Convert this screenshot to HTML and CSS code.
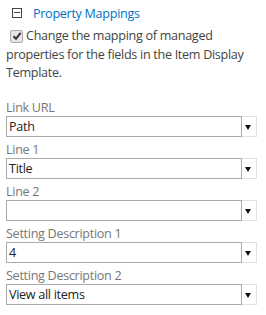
FILE: index.html
```html
<!DOCTYPE html>
<html lang="en">
<head>
    <meta charset="UTF-8">
    <title>Property Mappings</title>
    <link rel="stylesheet" href="styles.css">
</head>
<body>
  <div class="panel">
    <div class="head">
      <span class="toggle"></span>
      <span class="head-title">Property Mappings</span>
    </div>

    <p class="note">
      <span class="check">
        <svg width="10" height="10" viewBox="0 0 10 10"><path d="M1.5 5.2 L4 7.8 L8.6 1.8" fill="none" stroke="#333" stroke-width="2"/></svg>
      </span>Change the mapping of managed properties for the fields in the Item Display Template.
    </p>

    <div class="fields">
      <div class="field">
        <label>Link URL</label>
        <div class="select"><span class="value">Path</span><span class="arrow"></span></div>
      </div>
      <div class="field">
        <label>Line 1</label>
        <div class="select"><span class="value">Title</span><span class="arrow"></span></div>
      </div>
      <div class="field">
        <label>Line 2</label>
        <div class="select"><span class="value"></span><span class="arrow"></span></div>
      </div>
      <div class="field">
        <label>Setting Description 1</label>
        <div class="select"><span class="value">4</span><span class="arrow"></span></div>
      </div>
      <div class="field">
        <label>Setting Description 2</label>
        <div class="select"><span class="value">View all items</span><span class="arrow"></span></div>
      </div>
    </div>
  </div>
</body>
</html>
```

FILE: styles.css
```css
body{
    margin: 0;
    background-color: white;
    font-family: "Open Sans", "Noto Sans", sans-serif;
    font-size: 12.6px;
    letter-spacing: -0.3px;
    color: #444;
}
.panel{
    padding: 3px 8px 0 6px;
}
.head{
    display: flex;
    align-items: center;
    height: 20px;
}
.toggle{
    position: relative;
    width: 8px;
    height: 8px;
    border: 1px solid #444;
    margin-left: 6px;
}
.toggle::after{
    content: "";
    position: absolute;
    left: 1px;
    right: 1px;
    top: 3px;
    height: 1px;
    background: #444;
}
.head-title{
    margin-left: 11px;
    color: #0072c6;
}
.note{
    margin: 4px 0 0 0;
    line-height: 18.5px;
}
.check{
    display: inline-flex;
    align-items: center;
    justify-content: center;
    width: 11px;
    height: 11px;
    margin: 0 3px 0 4px;
    border: 1px solid #aaa;
    border-radius: 2px;
    background: #e4e4e4;
    vertical-align: -1px;
}
.fields{
    margin-top: 16px;
}
.field{
    margin-bottom: 4px;
}
.field label{
    display: block;
    color: #777;
    line-height: 17px;
}
.select{
    display: flex;
    height: 21px;
    margin-right: 1px;
}
.value{
    flex: 1;
    border: 1px solid #ababab;
    padding-left: 2px;
    line-height: 19px;
    color: #222;
}
.arrow{
    position: relative;
    width: 14px;
    border: 1px solid #e1e1e1;
    border-left: none;
}
.arrow::after{
    content: "";
    position: absolute;
    left: 3px;
    top: 8px;
    border-left: 3px solid transparent;
    border-right: 3px solid transparent;
    border-top: 5px solid #111;
}
```
